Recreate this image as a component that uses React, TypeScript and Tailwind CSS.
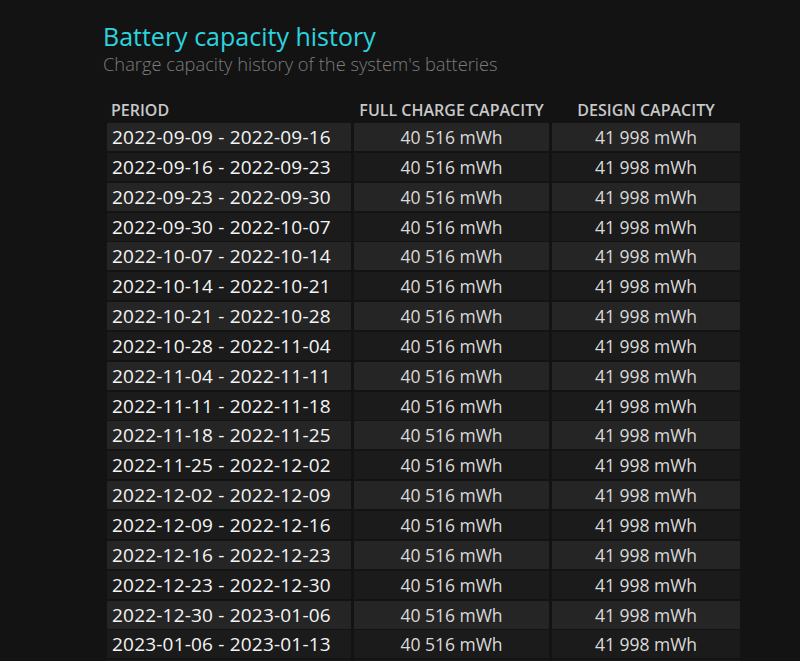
import React from 'react';

const periods = [
  '2022-09-09 - 2022-09-16',
  '2022-09-16 - 2022-09-23',
  '2022-09-23 - 2022-09-30',
  '2022-09-30 - 2022-10-07',
  '2022-10-07 - 2022-10-14',
  '2022-10-14 - 2022-10-21',
  '2022-10-21 - 2022-10-28',
  '2022-10-28 - 2022-11-04',
  '2022-11-04 - 2022-11-11',
  '2022-11-11 - 2022-11-18',
  '2022-11-18 - 2022-11-25',
  '2022-11-25 - 2022-12-02',
  '2022-12-02 - 2022-12-09',
  '2022-12-09 - 2022-12-16',
  '2022-12-16 - 2022-12-23',
  '2022-12-23 - 2022-12-30',
  '2022-12-30 - 2023-01-06',
  '2023-01-06 - 2023-01-13',
];

const font = { fontFamily: '"Open Sans", "Noto Sans", sans-serif' };

const App: React.FC = () => (
  <div className="w-[800px] h-[661px] overflow-hidden bg-[#131313]" style={font}>
    <div className="pl-[103px] pt-[20px]">
      <h1 className="text-[25px] leading-[33px] text-[#2bd3df]">Battery capacity history</h1>
      <p className="text-[18.3px] leading-[22px] font-light text-[#7c7c7c]">
        Charge capacity history of the system's batteries
      </p>
    </div>

    <div className="ml-[107px] mt-[21px] w-[633px]">
      <div className="grid grid-cols-[244px_195px_188px] gap-x-[3px] h-[27px] items-center text-[16px] font-semibold text-[#c8c8c8]">
        <div className="pl-[4px]">PERIOD</div>
        <div className="text-center">FULL CHARGE CAPACITY</div>
        <div className="text-center">DESIGN CAPACITY</div>
      </div>
      <div className="flex flex-col gap-y-[2px]">
        {periods.map((p, i) => (
          <div
            key={p}
            className="grid grid-cols-[244px_195px_188px] gap-x-[3px] h-[27.85px] leading-[28px]"
          >
            <div className={`pl-[5px] text-[19px] tracking-[0.2px] text-[#f4f4f4] ${i % 2 === 0 ? 'bg-[#252525]' : 'bg-[#1b1b1b]'}`}>{p}</div>
            <div className={`text-center text-[17.5px] text-[#dadada] ${i % 2 === 0 ? 'bg-[#252525]' : 'bg-[#1b1b1b]'}`}>40 516 mWh</div>
            <div className={`text-center text-[17.5px] text-[#dadada] ${i % 2 === 0 ? 'bg-[#252525]' : 'bg-[#1b1b1b]'}`}>41 998 mWh</div>
          </div>
        ))}
        {/* next row, only its top edge shows in the window */}
        <div className="grid grid-cols-[244px_195px_188px] gap-x-[3px] h-[27.85px]">
          <div className="bg-[#1b1b1b]" />
          <div className="bg-[#1b1b1b]" />
          <div className="bg-[#1b1b1b]" />
        </div>
      </div>
    </div>
  </div>
);

export default App;
